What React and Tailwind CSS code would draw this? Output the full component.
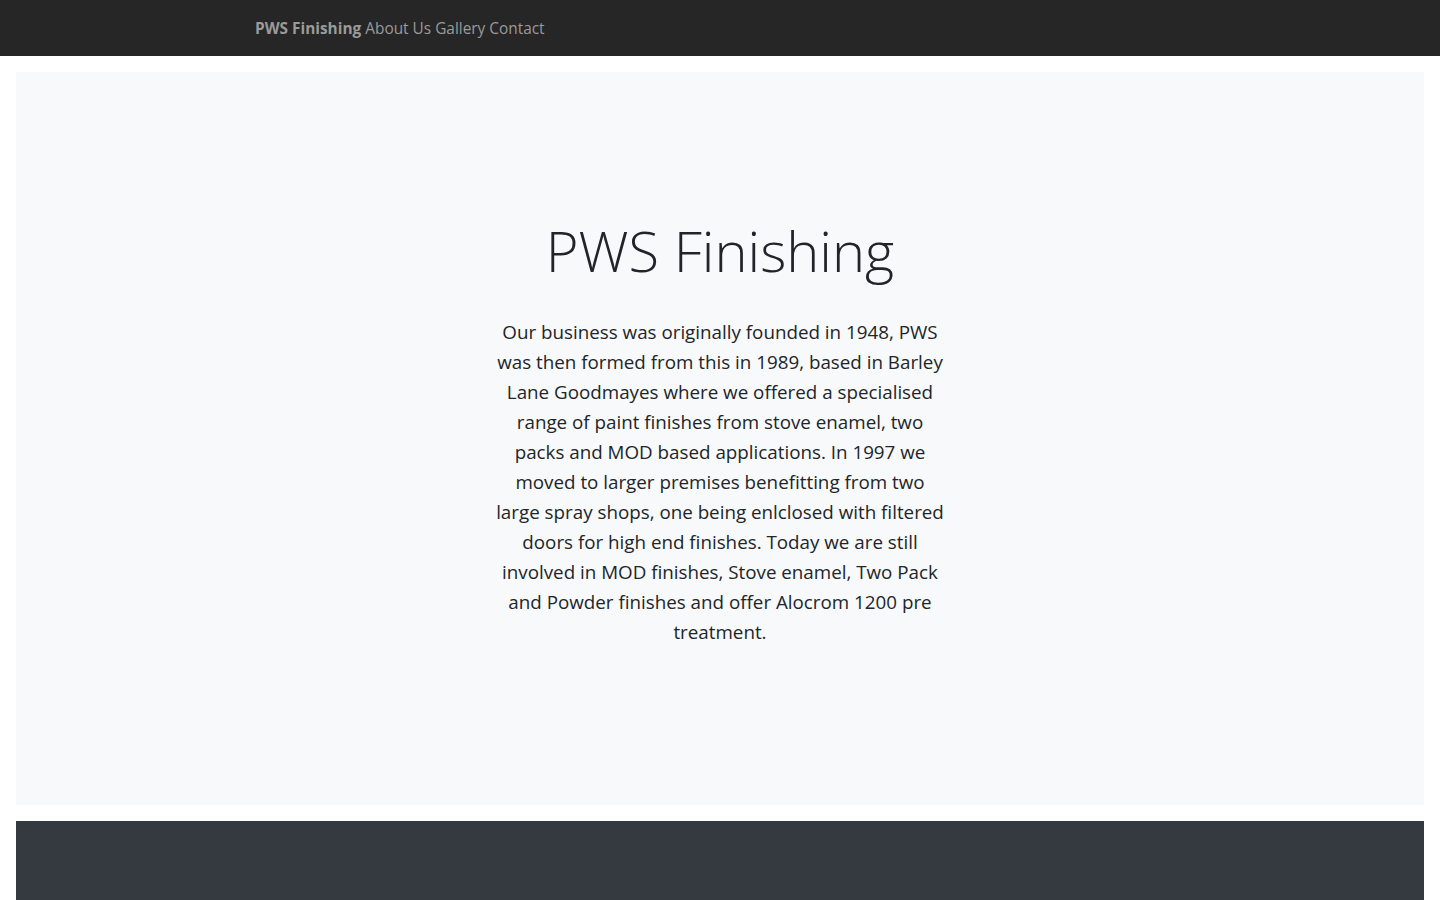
const lines = [
  "Our business was originally founded in 1948, PWS",
  "was then formed from this in 1989, based in Barley",
  "Lane Goodmayes where we offered a specialised",
  "range of paint finishes from stove enamel, two",
  "packs and MOD based applications. In 1997 we",
  "moved to larger premises benefitting from two",
  "large spray shops, one being enlclosed with filtered",
  "doors for high end finishes. Today we are still",
  "involved in MOD finishes, Stove enamel, Two Pack",
  "and Powder finishes and offer Alocrom 1200 pre",
  "treatment.",
];

export default function App() {
  return (
    <div className="min-h-screen bg-white font-['Open_Sans',sans-serif] text-[#212529]">
      {/* NAVBAR */}
      <nav className="h-14 bg-[#262626]">
        <div className="mx-auto flex h-full w-[930px] items-center gap-1 pt-[2px] text-[15.4px] text-[#9a9a9a]">
          <a className="font-bold">PWS Finishing</a>
          <a>About Us</a>
          <a>Gallery</a>
          <a>Contact</a>
        </div>
      </nav>

      {/* HERO */}
      <section className="m-4 flex h-[733px] flex-col items-center bg-[#f8f9fa] pt-[145px] text-center">
        <h1 className="text-[56px] font-[350] leading-[1.2]">PWS Finishing</h1>
        <p className="mt-[33px] text-[18.8px] leading-[30px]">
          {lines.map((l, i) => (
            <span key={i}>
              {l}
              {i < lines.length - 1 && <br />}
            </span>
          ))}
        </p>
      </section>

      {/* FOOTER */}
      <footer className="mx-4 h-[79px] bg-[#343a40]" />
    </div>
  );
}
